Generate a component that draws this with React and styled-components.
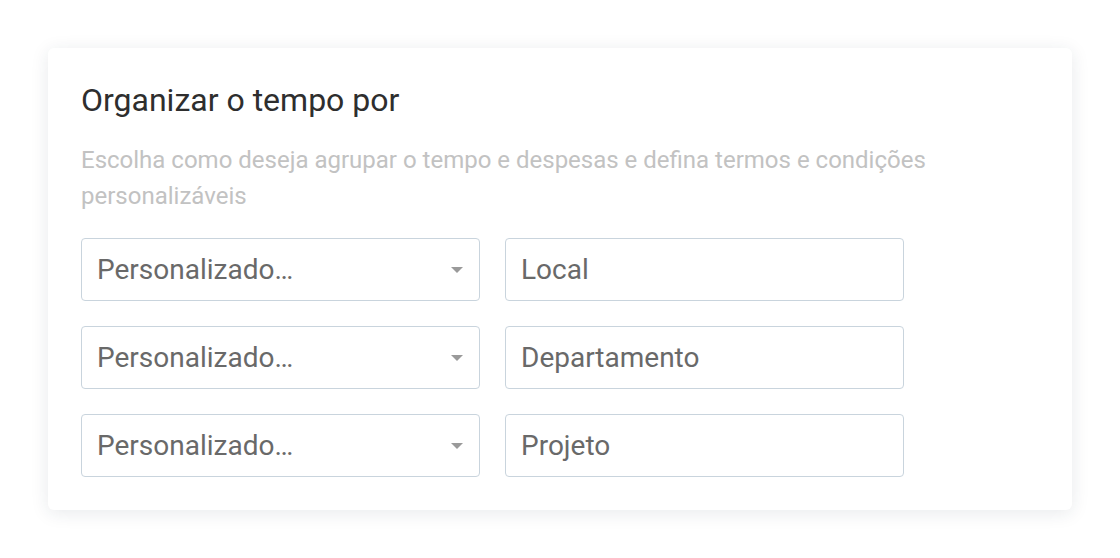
import React from 'react';
import styled, { createGlobalStyle } from 'styled-components';

const GlobalStyle = createGlobalStyle`
  html, body {
    margin: 0;
    padding: 0;
    background: #ffffff;
    font-family: Roboto, 'Liberation Sans', Arial, sans-serif;
  }
`;

const Page = styled.div`
  padding: 48px;
  box-sizing: border-box;
  width: 1120px;
  height: 558px;
`;

const Card = styled.section`
  background: #ffffff;
  border-radius: 6px;
  box-shadow: 0 3px 18px rgba(30, 50, 70, 0.1);
  padding: 32px 33px 33px 33px;
  box-sizing: border-box;
  width: 1024px;
`;

const Title = styled.h2`
  margin: 0;
  font-size: 32px;
  font-weight: 400;
  line-height: 40px;
  color: #2e2e2e;
`;

const Description = styled.p`
  margin: 22px 0 24px;
  font-size: 24px;
  line-height: 36px;
  color: #c2c2c2;
`;

const FieldGrid = styled.div`
  display: grid;
  grid-template-columns: 399px 399px;
  column-gap: 25px;
  row-gap: 25px;
`;

const Field = styled.div`
  position: relative;
  height: 63px;
  box-sizing: border-box;
  border: 1.5px solid #c9d4dd;
  border-radius: 4px;
  display: flex;
  align-items: center;
  padding: 0 15px;
  font-size: 28px;
  color: #696969;
`;

const Caret = styled.span`
  position: absolute;
  right: 16px;
  top: 50%;
  margin-top: -3px;
  width: 0;
  height: 0;
  border-left: 6px solid transparent;
  border-right: 6px solid transparent;
  border-top: 6px solid #9a9a9a;
`;

const rows = ['Local', 'Departamento', 'Projeto'];

const App = () => (
  <>
    <GlobalStyle />
    <Page>
      <Card>
        <Title>Organizar o tempo por</Title>
        <Description>
          Escolha como deseja agrupar o tempo e despesas e defina termos e condições personalizáveis
        </Description>
        <FieldGrid>
          {rows.map((label) => (
            <React.Fragment key={label}>
              <Field>
                Personalizado…
                <Caret />
              </Field>
              <Field>{label}</Field>
            </React.Fragment>
          ))}
        </FieldGrid>
      </Card>
    </Page>
  </>
);

export default App;
